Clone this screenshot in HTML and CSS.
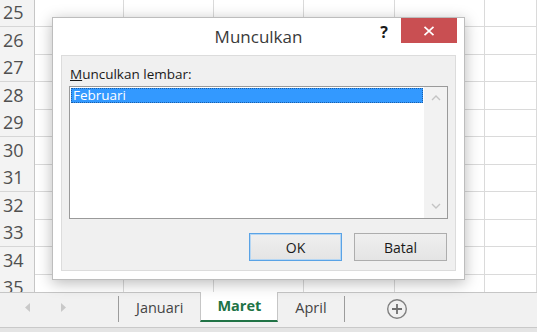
FILE: index.html
```html
<!DOCTYPE html>
<html lang="id">
<head>
    <meta charset="UTF-8">
    <meta name="viewport" content="width=device-width, initial-scale=1.0">
    <title>Munculkan lembar</title>
    <link rel="stylesheet" href="styles.css">
</head>
<body>

    <div class="app">
        <!-- Lembar kerja -->
        <div class="sheet">
            <div class="row"><div class="rowhead">25</div><div class="cell"></div><div class="cell"></div><div class="cell"></div><div class="cell"></div><div class="cell"></div><div class="cell"></div></div>
            <div class="row"><div class="rowhead">26</div><div class="cell"></div><div class="cell"></div><div class="cell"></div><div class="cell"></div><div class="cell"></div><div class="cell"></div></div>
            <div class="row"><div class="rowhead">27</div><div class="cell"></div><div class="cell"></div><div class="cell"></div><div class="cell"></div><div class="cell"></div><div class="cell"></div></div>
            <div class="row"><div class="rowhead">28</div><div class="cell"></div><div class="cell"></div><div class="cell"></div><div class="cell"></div><div class="cell"></div><div class="cell"></div></div>
            <div class="row"><div class="rowhead">29</div><div class="cell"></div><div class="cell"></div><div class="cell"></div><div class="cell"></div><div class="cell"></div><div class="cell"></div></div>
            <div class="row"><div class="rowhead">30</div><div class="cell"></div><div class="cell"></div><div class="cell"></div><div class="cell"></div><div class="cell"></div><div class="cell"></div></div>
            <div class="row"><div class="rowhead">31</div><div class="cell"></div><div class="cell"></div><div class="cell"></div><div class="cell"></div><div class="cell"></div><div class="cell"></div></div>
            <div class="row"><div class="rowhead">32</div><div class="cell"></div><div class="cell"></div><div class="cell"></div><div class="cell"></div><div class="cell"></div><div class="cell"></div></div>
            <div class="row"><div class="rowhead">33</div><div class="cell"></div><div class="cell"></div><div class="cell"></div><div class="cell"></div><div class="cell"></div><div class="cell"></div></div>
            <div class="row"><div class="rowhead">34</div><div class="cell"></div><div class="cell"></div><div class="cell"></div><div class="cell"></div><div class="cell"></div><div class="cell"></div></div>
            <div class="row"><div class="rowhead">35</div><div class="cell"></div><div class="cell"></div><div class="cell"></div><div class="cell"></div><div class="cell"></div><div class="cell"></div></div>
        </div>

        <!-- Tab lembar -->
        <div class="tabbar">
            <div class="tabs">
                <div class="nav">
                    <svg width="6" height="9" viewBox="0 0 6 9"><polygon points="5,0 5,9 0,4.5" fill="#c9c9c9"/></svg>
                    <svg width="6" height="9" viewBox="0 0 6 9"><polygon points="1,0 1,9 6,4.5" fill="#c9c9c9"/></svg>
                </div>
                <div class="sep"></div>
                <div class="tab">Januari</div>
                <div class="tab active">Maret</div>
                <div class="tab">April</div>
                <div class="sep"></div>
                <div class="addsheet">
                    <svg width="22" height="22" viewBox="0 0 22 22">
                        <circle cx="11" cy="11" r="9.3" fill="none" stroke="#808080" stroke-width="1.4"/>
                        <path d="M11 6v10M6 11h10" stroke="#707070" stroke-width="1.8"/>
                    </svg>
                </div>
            </div>
            <div class="tabfoot"></div>
            <div class="statusedge"></div>
        </div>

        <!-- Dialog Munculkan -->
        <div class="dialog">
            <div class="titlebar">
                <div></div>
                <div class="title">Munculkan</div>
                <div class="controls">
                    <span class="help">?</span>
                    <span class="close">
                        <svg width="12" height="10" viewBox="0 0 12 10"><path d="M1.5 0.8l9 8.4M10.5 0.8l-9 8.4" stroke="#fff" stroke-width="1.7"/></svg>
                    </span>
                </div>
            </div>
            <div class="client">
                <div class="label"><u>M</u>unculkan lembar:</div>
                <div class="listbox">
                    <div class="items">
                        <div class="item selected">Februari</div>
                    </div>
                    <div class="scrollbar">
                        <svg width="10" height="6" viewBox="0 0 10 6"><path d="M1 5l4-4 4 4" fill="none" stroke="#c4c4c4" stroke-width="1.4"/></svg>
                        <svg width="10" height="6" viewBox="0 0 10 6"><path d="M1 1l4 4 4-4" fill="none" stroke="#c4c4c4" stroke-width="1.4"/></svg>
                    </div>
                </div>
                <div class="buttons">
                    <button class="btn default">OK</button>
                    <button class="btn">Batal</button>
                </div>
            </div>
        </div>
    </div>

</body>
</html>
```

FILE: styles.css
```css
body {
    margin: 0;
    padding: 0;
    font-family: "Open Sans", "Noto Sans", sans-serif;
    background-color: #fff;
    overflow: hidden;
}

.app {
    position: relative;
    width: 537px;
    height: 332px;
    overflow: hidden;
    display: flex;
    flex-direction: column;
}

/* Lembar kerja */
.sheet {
    height: 292px;
    overflow: hidden;
    flex-shrink: 0;
}

.row {
    display: grid;
    grid-template-columns: 35px 89px 90px 90px 91px 90px 1fr;
    height: 27.5px;
}

.row:first-child {
    margin-top: -0.8px;
}

.rowhead {
    box-sizing: border-box;
    background-color: #f3f3f3;
    border-right: 1px solid #c6c6c6;
    border-bottom: 1px solid #d6d6d6;
    color: #505050;
    font-size: 18px;
    line-height: 27px;
    padding-left: 3px;
}

.cell {
    box-sizing: border-box;
    border-right: 1px solid #dadada;
    border-bottom: 1px solid #dadada;
}

/* Tab lembar */
.tabbar {
    flex: 1;
    display: flex;
    flex-direction: column;
    border-top: 1px solid #c6c6c6;
    background-color: #f1f1f1;
}

.tabs {
    height: 29px;
    display: flex;
    align-items: stretch;
}

.nav {
    width: 118px;
    display: flex;
    align-items: center;
    gap: 29px;
    padding-left: 25px;
    box-sizing: border-box;
}

.sep {
    width: 1px;
    background-color: #9c9c9c;
    margin-top: 3px;
}

.tab {
    padding: 0 17px;
    font-size: 14.5px;
    line-height: 29px;
    color: #444;
}

.tab.active {
    background-color: #fff;
    color: #217346;
    font-weight: bold;
    border-left: 1px solid #c6c6c6;
    border-right: 1px solid #c6c6c6;
    border-bottom: 2px solid #217346;
    margin-top: -1px;
    line-height: 28px;
    padding: 0 16px;
}

.addsheet {
    display: flex;
    align-items: center;
    margin-left: 41px;
    padding-top: 2px;
}

.tabfoot {
    height: 5px;
}

.statusedge {
    flex: 1;
    border-top: 1px solid #c9c9c9;
    background-color: #e4e4e4;
}

/* Dialog */
.dialog {
    position: absolute;
    left: 52px;
    top: 17px;
    width: 413px;
    box-sizing: border-box;
    background-color: #fff;
    border: 1px solid #bdbdbd;
    box-shadow: 0 3px 14px rgba(0, 0, 0, 0.28);
    padding: 0 8px 8px 8px;
}

.titlebar {
    height: 37px;
    display: grid;
    grid-template-columns: 1fr auto 1fr;
}

.title {
    font-size: 17px;
    line-height: 38px;
    color: #3a3a3a;
}

.controls {
    display: flex;
    justify-content: flex-end;
    align-items: flex-start;
    margin-right: -1px;
}

.help {
    font-size: 16px;
    font-weight: bold;
    color: #1a1a1a;
    line-height: 28px;
    margin-right: 13px;
}

.close {
    width: 56px;
    height: 25px;
    background-color: #c94f52;
    display: flex;
    align-items: center;
    justify-content: center;
}

.client {
    background-color: #f0f0f0;
    border: 1px solid #dcdcdc;
    padding: 9px 7px 9px 7px;
}

.label {
    font-size: 13.5px;
    line-height: 18px;
    color: #1a1a1a;
    padding-left: 1px;
    margin-bottom: 3px;
}

.listbox {
    height: 133px;
    box-sizing: border-box;
    border: 1px solid #9a9a9a;
    background-color: #fff;
    display: flex;
}

.items {
    flex: 1;
    padding: 1px;
}

.item {
    font-size: 13.5px;
    line-height: 15px;
    height: 15px;
    padding-left: 2px;
    color: #000;
}

.item.selected {
    background-color: #3399ff;
    color: #fff;
    outline: 1px dotted #1c5fa8;
    outline-offset: -1px;
}

.scrollbar {
    width: 23px;
    background-color: #f2f2f2;
    display: flex;
    flex-direction: column;
    justify-content: space-between;
    align-items: center;
    padding: 8px 0 9px;
    box-sizing: border-box;
}

.buttons {
    display: flex;
    justify-content: flex-end;
    gap: 12px;
    margin-top: 14px;
    padding-right: 1px;
}

.btn {
    width: 93px;
    height: 28px;
    box-sizing: border-box;
    font-family: "Open Sans", "Noto Sans", sans-serif;
    font-size: 14px;
    color: #1a1a1a;
    background: linear-gradient(#efefef, #e4e4e4);
    border: 1px solid #adadad;
    padding: 0;
}

.btn.default {
    border-color: #5aa3e6;
    box-shadow: inset 0 0 0 1px #b5d6f3;
}
```
